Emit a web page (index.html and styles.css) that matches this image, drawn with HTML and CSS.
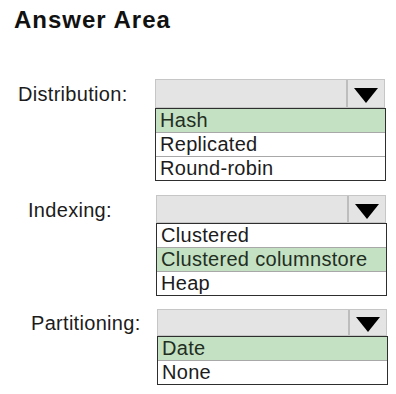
FILE: index.html
```html
<!DOCTYPE html>
<html lang="en">

<head>
    <meta charset="UTF-8">
    <meta name="viewport" content="width=device-width, initial-scale=1.0">
    <title>Answer Area</title>
    <link rel="stylesheet" href="styles.css">
</head>

<body>

    <div class="area">
        <h1 class="titulo">Answer Area</h1>

        <!-- Distribution -->
        <div class="campo campo-dist">
            <div class="rotulo">Distribution:</div>
            <div class="caixa">
                <div class="seletor">
                    <span class="seletor-valor"></span>
                    <span class="seletor-btn">
                        <svg width="24" height="15" viewBox="0 0 24 15"><polygon points="0,0 24,0 12,15" fill="#000"/></svg>
                    </span>
                </div>
                <ul class="opcoes">
                    <li class="opcao marcada">Hash</li>
                    <li class="opcao">Replicated</li>
                    <li class="opcao">Round-robin</li>
                </ul>
            </div>
        </div>

        <!-- Indexing -->
        <div class="campo campo-idx">
            <div class="rotulo">Indexing:</div>
            <div class="caixa">
                <div class="seletor">
                    <span class="seletor-valor"></span>
                    <span class="seletor-btn">
                        <svg width="24" height="15" viewBox="0 0 24 15"><polygon points="0,0 24,0 12,15" fill="#000"/></svg>
                    </span>
                </div>
                <ul class="opcoes">
                    <li class="opcao">Clustered</li>
                    <li class="opcao marcada">Clustered columnstore</li>
                    <li class="opcao">Heap</li>
                </ul>
            </div>
        </div>

        <!-- Partitioning -->
        <div class="campo campo-part">
            <div class="rotulo">Partitioning:</div>
            <div class="caixa">
                <div class="seletor">
                    <span class="seletor-valor"></span>
                    <span class="seletor-btn">
                        <svg width="24" height="15" viewBox="0 0 24 15"><polygon points="0,0 24,0 12,15" fill="#000"/></svg>
                    </span>
                </div>
                <ul class="opcoes">
                    <li class="opcao marcada">Date</li>
                    <li class="opcao">None</li>
                </ul>
            </div>
        </div>
    </div>

</body>

</html>
```

FILE: styles.css
```css
body{
    margin: 0;
    background: #fff;
    font-family: "Liberation Sans", Arial, sans-serif;
    color: #1c1c1c;
}

.area{
    width: 396px;
    padding-top: 6px;
}

.titulo{
    margin: 0 0 0 14px;
    font-size: 24px;
    line-height: 28px;
    font-weight: bold;
    letter-spacing: 1px;
    color: #111;
}

.campo{
    display: flex;
    align-items: flex-start;
}

.campo-dist{
    margin-top: 45px;
}
.campo-idx{
    margin-top: 14px;
}
.campo-part{
    margin-top: 13px;
}

.rotulo{
    width: 155px;
    box-sizing: border-box;
    font-size: 20px;
    line-height: 29px;
    padding-top: 1px;
    letter-spacing: 0.3px;
}
.campo-dist .rotulo{
    padding-left: 18px;
}
.campo-idx .rotulo{
    width: 156px;
    padding-left: 28px;
}
.campo-part .rotulo{
    width: 157px;
    padding-left: 31px;
    padding-top: 0;
}

.caixa{
    width: 230px;
}

.seletor{
    display: flex;
    height: 29px;
    box-sizing: border-box;
    border: 1px solid #c6c6c6;
    background: #e4e4e4;
}
.campo-idx .seletor{
    height: 28px;
}
.campo-part .seletor{
    height: 27px;
}

.seletor-valor{
    flex: 1;
}

.seletor-btn{
    width: 38px;
    border-left: 2px solid #bdbdbd;
    display: flex;
    justify-content: center;
    align-items: center;
    padding-top: 4px;
    box-sizing: border-box;
}

.opcoes{
    list-style: none;
    margin: 0;
    padding: 0;
    width: 231px;
    box-sizing: border-box;
    border: 1px solid #2e2e2e;
}

.opcao{
    font-size: 20px;
    line-height: 23px;
    padding-left: 4px;
    letter-spacing: 0.3px;
    border-top: 1px solid #a8a8a8;
}
.opcao:first-child{
    border-top: none;
}

.marcada{
    background: #c5e1c3;
    color: #1f2e1f;
}
```
